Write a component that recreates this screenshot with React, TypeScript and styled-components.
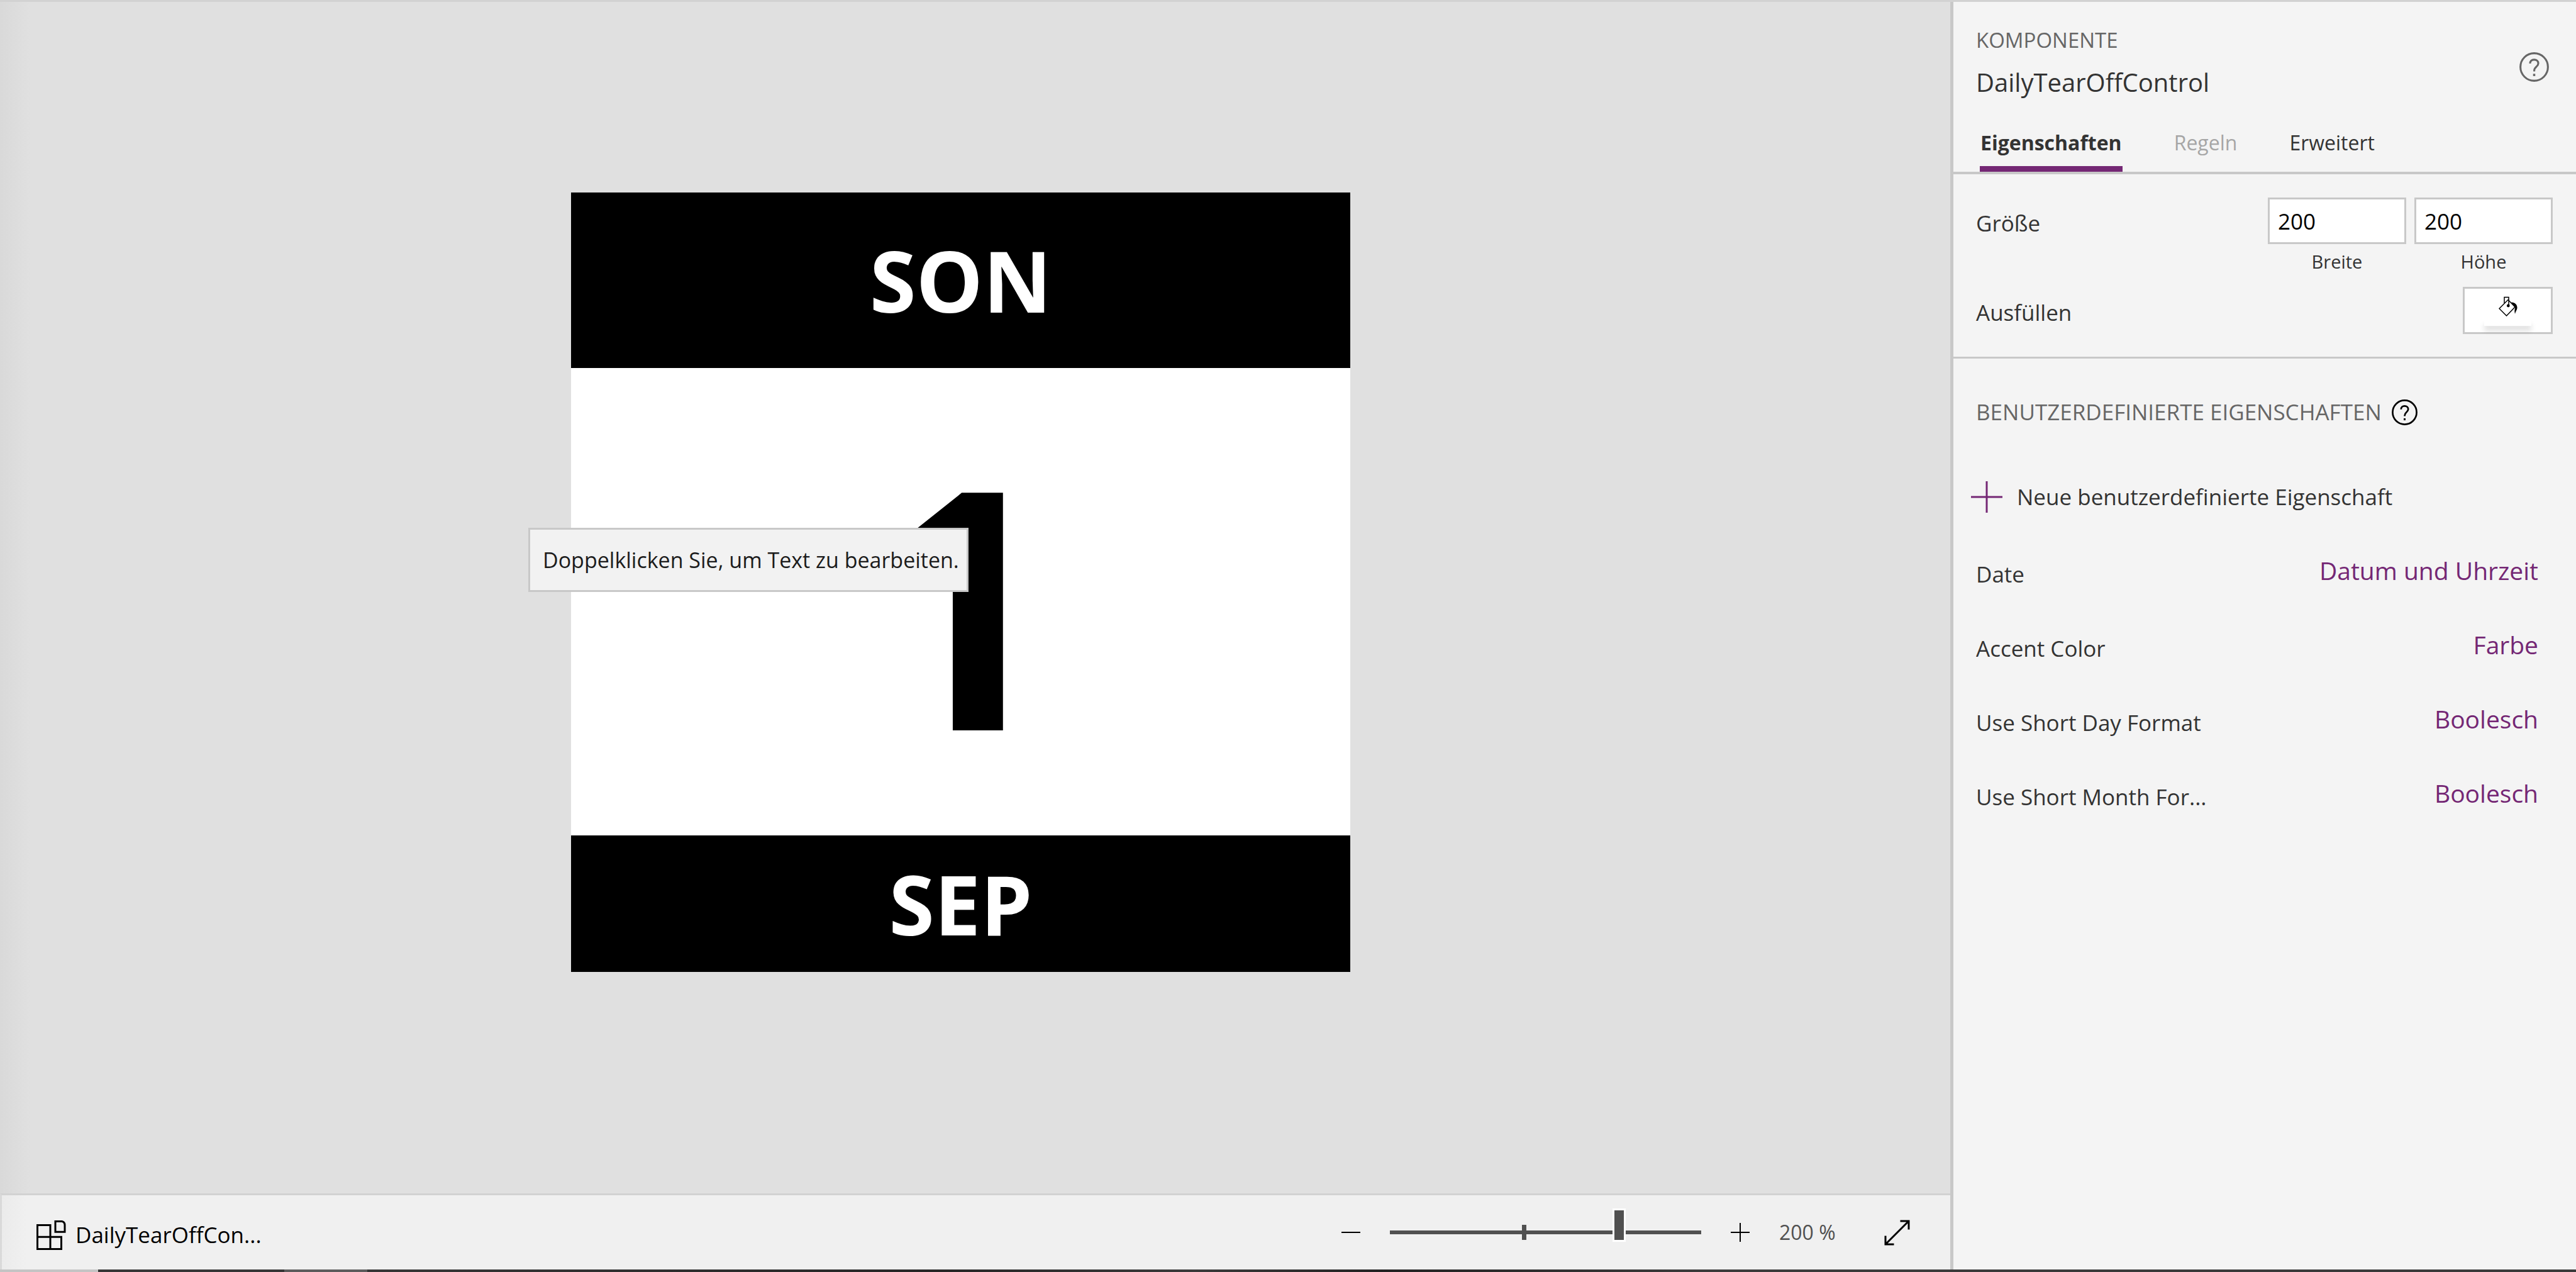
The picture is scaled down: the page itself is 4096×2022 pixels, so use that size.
import React, { useState } from "react";
import styled, { createGlobalStyle } from "styled-components";

const color = {
  accent: "#742774",
  line: "#c8c8c8",
  text: "#333333",
  muted: "#666666",
  control: "#505050",
};

const GlobalStyle = createGlobalStyle`
  *, *::before, *::after { box-sizing: border-box; }
  body {
    margin: 0;
    background: #f4f4f4;
    color: ${color.text};
    font-family: "Open Sans", "Noto Sans", sans-serif;
    font-size: 35px;
    line-height: 48px;
  }
  button, input { font: inherit; color: inherit; }
`;

const Page = styled.div`
  display: flex;
  flex-direction: column;
  height: 100vh;
  border-top: 3px solid #d2d2d2;
`;

const Workspace = styled.div`
  display: flex;
  flex: 1;
  min-height: 0;
`;

const Stage = styled.main`
  display: flex;
  flex-direction: column;
  flex: 1;
  min-width: 0;
`;

const Canvas = styled.div`
  display: flex;
  flex: 1;
  align-items: center;
  justify-content: center;
  padding: 0 46px 50px 0;
  background: linear-gradient(to right, #d9d9d9, #e0e0e0 48px);
`;

const Calendar = styled.section`
  position: relative;
  display: grid;
  grid-template-rows: 279fr 743fr 217fr;
  width: 1239px;
  height: 1239px;
  background: #ffffff;
  font-weight: 700;
`;

const CalendarBand = styled.div<{ $size: number }>`
  display: flex;
  align-items: center;
  justify-content: center;
  background: #000000;
  color: #ffffff;
  font-size: ${(p) => p.$size}px;
  line-height: 1;
`;

const DayNumber = styled.div`
  display: flex;
  align-items: center;
  justify-content: center;
  min-height: 0;
  color: #000000;
  font-size: 529px;
  line-height: 1;
`;

const Tooltip = styled.div`
  position: absolute;
  top: 533px;
  left: -68px;
  padding: 24px 18px 24px 20px;
  width: 700px;
  border: 3px solid ${color.line};
  background: #f2f2f2;
  color: #1c1c1c;
  font-size: 34px;
  font-weight: 400;
  white-space: nowrap;
`;

const StatusBar = styled.footer`
  display: flex;
  align-items: center;
  justify-content: space-between;
  height: 121px;
  padding: 0 64px 0 55px;
  border-top: 3px solid #d2d2d2;
  border-left: 3px solid #d9d9d9;
  background: linear-gradient(to right, #ebebeb, #f0f0f0 40px);
`;

const Breadcrumb = styled.div`
  display: flex;
  align-items: center;
  gap: 15px;
  padding-top: 8px;
  color: #000000;
`;

const ZoomTools = styled.div`
  display: flex;
  align-items: center;
  gap: 47px;
`;

const IconButton = styled.button`
  display: flex;
  align-items: center;
  justify-content: center;
  padding: 0;
  border: 0;
  background: none;
  color: #000000;
`;

const HeaderHelp = styled(IconButton)`
  padding-top: 12px;
`;

const ZoomValue = styled.output`
  min-width: 120px;
  color: ${color.control};
  font-size: 32px;
`;

const ZoomSlider = styled.input`
  appearance: none;
  width: 495px;
  height: 96px;
  margin: 0;
  background: linear-gradient(${color.control}, ${color.control}) no-repeat 43% 50% / 7px 24px;

  &::-webkit-slider-runnable-track {
    height: 6px;
    background: ${color.control};
  }
  &::-webkit-slider-thumb {
    appearance: none;
    width: 21px;
    height: 53px;
    margin-top: -35px;
    border: 3px solid #ffffff;
    background: ${color.control};
  }
`;

const Panel = styled.aside`
  flex: none;
  width: 995px;
  border-left: 5px solid ${color.line};
  background: #f4f4f4;
`;

const PanelHeader = styled.header`
  padding: 39px 37px 0 36px;
  border-bottom: 4px solid ${color.line};
`;

const TitleRow = styled.div`
  display: flex;
  align-items: center;
  justify-content: space-between;
  padding-right: 6px;
  color: ${color.muted};
`;

const Titles = styled.div`
  display: flex;
  flex-direction: column;
  gap: 17px;
`;

const Kind = styled.span`
  font-size: 33px;
  line-height: 44px;
`;

const Title = styled.h1`
  margin: 0;
  color: ${color.text};
  font-size: 40px;
  font-weight: 400;
  line-height: 56px;
`;

const Tabs = styled.div`
  display: flex;
  gap: 81px;
  padding: 46px 0 0 6px;
`;

const Tab = styled.button<{ $active?: boolean }>`
  padding: 0 1px 15px;
  border: 0;
  border-bottom: 9px solid ${(p) => (p.$active ? color.accent : "transparent")};
  background: none;
  color: ${color.text};
  font-size: 32px;
  font-weight: ${(p) => (p.$active ? 700 : 400)};
  line-height: 44px;

  &:disabled { color: #a6a6a6; }
`;

const Settings = styled.section`
  display: flex;
  flex-direction: column;
  gap: 20px;
  padding: 37px 37px 36px 36px;
  border-bottom: 3px solid ${color.line};
`;

const SettingRow = styled.div`
  display: flex;
  align-items: flex-start;
  justify-content: space-between;
`;

const SettingName = styled.span`
  padding-top: 17px;
`;

const Fields = styled.div`
  display: flex;
  gap: 13px;
`;

const Field = styled.label`
  display: flex;
  flex-direction: column;
  align-items: center;
  gap: 8px;
  font-size: 29px;
  line-height: 40px;
`;

const NumberInput = styled.input`
  order: -1;
  width: 220px;
  height: 74px;
  padding: 0 13px;
  border: 3px solid ${color.line};
  border-radius: 0;
  background: #ffffff;
  color: #000000;
  font-size: 35px;
`;

const FillButton = styled.button`
  display: flex;
  flex-direction: column;
  align-items: center;
  justify-content: space-between;
  width: 143px;
  height: 75px;
  padding: 12px 0 10px;
  border: 3px solid ${color.line};
  background: #ffffff;
`;

const Swatch = styled.span`
  width: 75px;
  height: 9px;
  background: #ffffff;
  box-shadow: 0 7px 9px rgba(0, 0, 0, 0.14);
`;

const CustomProperties = styled.section`
  padding: 61px 60px 0 36px;
`;

const SectionHeading = styled.div`
  display: flex;
  align-items: center;
  gap: 16px;
  color: ${color.muted};
`;

const HeadingText = styled.h2`
  margin: 0;
  font-size: 35px;
  font-weight: 400;
`;

const AddProperty = styled.button`
  display: flex;
  align-items: center;
  gap: 23px;
  height: 50px;
  margin: 86px 0 35px -8px;
  padding: 0;
  border: 0;
  background: none;
`;

const PropertyList = styled.ul`
  margin: 0;
  padding: 0;
  list-style: none;
`;

const PropertyRow = styled.li`
  display: flex;
  align-items: center;
  justify-content: space-between;
  height: 118px;
`;

const PropertyName = styled.span`
  overflow: hidden;
  max-width: 390px;
  padding-top: 8px;
  text-overflow: ellipsis;
  white-space: nowrap;
`;

const PropertyType = styled.a`
  padding-bottom: 4px;
  color: ${color.accent};
  font-size: 39px;
  line-height: 54px;
  text-decoration: none;
`;

const Taskbar = styled.div`
  flex: none;
  height: 4px;
  background: linear-gradient(
    to right,
    #c4c4c4 156px,
    #363636 156px,
    #363636 452px,
    #5c5c5c 452px,
    #5c5c5c 584px,
    #363636 584px,
    #262626 1500px,
    #3a3a3a 1900px,
    #222222 2200px,
    #3a3a3a 2700px
  );
`;

function HelpIcon({ size, stroke }: { size: number; stroke: string }) {
  return (
    <svg width={size} height={size} viewBox="0 0 46 46" fill="none" stroke={stroke} strokeWidth="3">
      <circle cx="23" cy="23" r="21.4" />
      <path d="M16.6 17.6c0-3.7 2.7-6 6.3-6 3.8 0 6.5 2.2 6.5 5.7 0 5.4-6.3 5.4-6.3 11.2v1.3" />
      <path d="M23 33.6v3.5" strokeWidth="3.4" />
    </svg>
  );
}

function ComponentIcon() {
  return (
    <svg width="47" height="47" viewBox="0 0 47 47" fill="none" stroke="currentColor" strokeWidth="3">
      <path d="M1.500 7.500H22V45.500H1.500z" />
      <path d="M1.500 26.300H39.500V45.500H22" />
      <path d="M30 1.500h10.500q4.500 1 4.500 6V18.300H30z" />
    </svg>
  );
}

function StepIcon({ plus }: { plus?: boolean }) {
  return (
    <svg width="30" height="30" viewBox="0 0 30 30" stroke="currentColor" strokeWidth="2">
      <path d="M0 15H30" />
      {plus && <path d="M15 0V30" />}
    </svg>
  );
}

function ExpandIcon() {
  return (
    <svg width="41" height="41" viewBox="0 0 41 41" fill="none" stroke="currentColor" strokeWidth="3">
      <path d="M2 39L39 2M25.500 2H39V15.500M2 25.500V39H15.500" />
    </svg>
  );
}

function AddIcon() {
  return (
    <svg width="50" height="50" viewBox="0 0 50 50" stroke={color.accent} strokeWidth="3">
      <path d="M0 25H50M25 0V50" />
    </svg>
  );
}

function BucketIcon() {
  return (
    <svg width="30" height="32" viewBox="0 0 30 32" fill="none" stroke="#000000" strokeWidth="1.5">
      <path d="M1 19.500L15 5.500L26 17L12.500 31z" />
      <path d="M9 11V1.500H16V14" />
      <circle cx="15.3" cy="15" r="2.4" fill="#000000" stroke="none" />
      <path d="M20 9.500c6 .3 9.500 3.700 9.500 8.500 0 3-2 5-3.500 10-.8-3-1-6 .2-10z" fill="#000000" stroke="none" />
    </svg>
  );
}

const properties = [
  { name: "Date", type: "Datum und Uhrzeit" },
  { name: "Accent Color", type: "Farbe" },
  { name: "Use Short Day Format", type: "Boolesch" },
  { name: "Use Short Month For...", type: "Boolesch" },
];

export default function App() {
  const [zoom, setZoom] = useState(746);
  const [width, setWidth] = useState("200");
  const [height, setHeight] = useState("200");

  return (
    <Page>
      <GlobalStyle />
      <Workspace>
        <Stage>
          <Canvas>
            <Calendar>
              <CalendarBand $size={134}>SON</CalendarBand>
              <DayNumber>1</DayNumber>
              <CalendarBand $size={131}>SEP</CalendarBand>
              <Tooltip role="tooltip">Doppelklicken Sie, um Text zu bearbeiten.</Tooltip>
            </Calendar>
          </Canvas>
          <StatusBar>
            <Breadcrumb>
              <ComponentIcon />
              <span>DailyTearOffCon...</span>
            </Breadcrumb>
            <ZoomTools>
              <IconButton aria-label="Verkleinern">
                <StepIcon />
              </IconButton>
              <ZoomSlider
                type="range"
                aria-label="Zoom"
                min={0}
                max={1000}
                value={zoom}
                onChange={(e) => setZoom(Number(e.target.value))}
              />
              <IconButton aria-label="Vergrößern">
                <StepIcon plus />
              </IconButton>
              <ZoomValue>200 %</ZoomValue>
              <IconButton aria-label="An Fenster anpassen">
                <ExpandIcon />
              </IconButton>
            </ZoomTools>
          </StatusBar>
        </Stage>
        <Panel>
          <PanelHeader>
            <TitleRow>
              <Titles>
                <Kind>KOMPONENTE</Kind>
                <Title>DailyTearOffControl</Title>
              </Titles>
              <HeaderHelp aria-label="Hilfe">
                <HelpIcon size={47} stroke={color.muted} />
              </HeaderHelp>
            </TitleRow>
            <Tabs role="tablist">
              <Tab role="tab" aria-selected $active>Eigenschaften</Tab>
              <Tab role="tab" disabled>Regeln</Tab>
              <Tab role="tab">Erweitert</Tab>
            </Tabs>
          </PanelHeader>
          <Settings>
            <SettingRow>
              <SettingName>Größe</SettingName>
              <Fields>
                <Field>
                  Breite
                  <NumberInput value={width} onChange={(e) => setWidth(e.target.value)} />
                </Field>
                <Field>
                  Höhe
                  <NumberInput value={height} onChange={(e) => setHeight(e.target.value)} />
                </Field>
              </Fields>
            </SettingRow>
            <SettingRow>
              <SettingName>Ausfüllen</SettingName>
              <FillButton aria-label="Füllfarbe">
                <BucketIcon />
                <Swatch />
              </FillButton>
            </SettingRow>
          </Settings>
          <CustomProperties>
            <SectionHeading>
              <HeadingText>BENUTZERDEFINIERTE EIGENSCHAFTEN</HeadingText>
              <IconButton aria-label="Hilfe zu Eigenschaften">
                <HelpIcon size={41} stroke="#000000" />
              </IconButton>
            </SectionHeading>
            <AddProperty>
              <AddIcon />
              Neue benutzerdefinierte Eigenschaft
            </AddProperty>
            <PropertyList>
              {properties.map((p) => (
                <PropertyRow key={p.name}>
                  <PropertyName>{p.name}</PropertyName>
                  <PropertyType href="#">{p.type}</PropertyType>
                </PropertyRow>
              ))}
            </PropertyList>
          </CustomProperties>
        </Panel>
      </Workspace>
      <Taskbar />
    </Page>
  );
}
